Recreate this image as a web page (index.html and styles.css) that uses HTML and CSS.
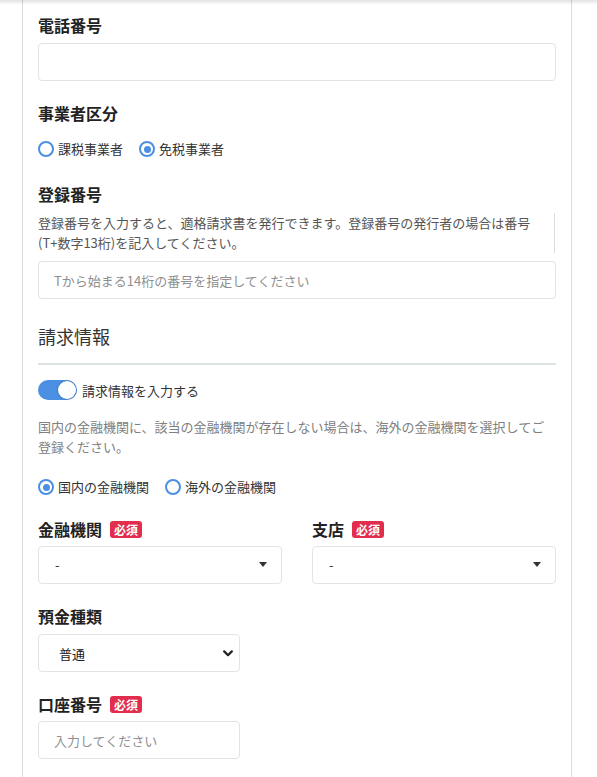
FILE: index.html
```html
<!DOCTYPE html>
<html lang="ja">
<head>
<meta charset="utf-8">
<title>請求情報</title>
<link rel="stylesheet" href="styles.css">
</head>
<body>
<div class="top-shadow"></div>
<main class="card">
  <div class="field">
    <div class="label">電話番号</div>
    <div class="input"></div>
  </div>

  <div class="field">
    <div class="label">事業者区分</div>
    <div class="radios radios-biz">
      <span class="radio-item"><span class="radio"></span><span class="radio-text">課税事業者</span></span>
      <span class="radio-item"><span class="radio checked"></span><span class="radio-text">免税事業者</span></span>
    </div>
  </div>

  <div class="field field-reg">
    <div class="label">登録番号</div>
    <div class="help help-box">登録番号を入力すると、適格請求書を発行できます。登録番号の発行者の場合は番号<br>(T+数字13桁)を記入してください。</div>
    <div class="input input-reg"><span class="placeholder">Tから始まる14桁の番号を指定してください</span></div>
  </div>

  <h2 class="section-title">請求情報</h2>
  <hr class="divider">

  <div class="toggle-row">
    <span class="toggle"><span class="knob"></span></span>
    <span class="toggle-text">請求情報を入力する</span>
  </div>

  <div class="help help-light">国内の金融機関に、該当の金融機関が存在しない場合は、海外の金融機関を選択してご<br>登録ください。</div>

  <div class="radios radios-bank">
    <span class="radio-item"><span class="radio checked"></span><span class="radio-text">国内の金融機関</span></span>
    <span class="radio-item"><span class="radio"></span><span class="radio-text">海外の金融機関</span></span>
  </div>

  <div class="grid-2">
    <div class="col">
      <div class="label">金融機関<span class="badge">必須</span></div>
      <div class="select">
        <span class="select-value">-</span>
        <svg class="caret" width="8" height="5" viewBox="0 0 8 5"><path d="M0 0 L8 0 L4 5 Z" fill="#333"/></svg>
      </div>
    </div>
    <div class="col">
      <div class="label">支店<span class="badge">必須</span></div>
      <div class="select">
        <span class="select-value">-</span>
        <svg class="caret" width="8" height="5" viewBox="0 0 8 5"><path d="M0 0 L8 0 L4 5 Z" fill="#333"/></svg>
      </div>
    </div>
  </div>

  <div class="field">
    <div class="label">預金種類</div>
    <div class="native-select">
      <span class="native-value">普通</span>
      <svg class="chevron" width="10" height="7" viewBox="0 0 10 7"><path d="M1.2 1.4 L5 5.2 L8.8 1.4" fill="none" stroke="#222" stroke-width="2.2" stroke-linecap="round" stroke-linejoin="round"/></svg>
    </div>
  </div>

  <div class="field field-account">
    <div class="label">口座番号<span class="badge">必須</span></div>
    <div class="input input-small"><span class="placeholder">入力してください</span></div>
  </div>
</main>
</body>
</html>
```

FILE: styles.css
```css
* {
  box-sizing: border-box;
}

html, body {
  margin: 0;
  padding: 0;
  background: #ffffff;
}

body {
  font-family: "Noto Sans CJK JP", "Noto Sans", sans-serif;
  color: #222;
  font-size: 13px;
}

.top-shadow {
  position: fixed;
  top: 0;
  left: 0;
  right: 0;
  height: 5px;
  background: linear-gradient(to bottom, rgba(0, 0, 0, 0.11), rgba(0, 0, 0, 0));
  z-index: 5;
}

.card {
  width: 550px;
  margin-left: 22px;
  min-height: 777px;
  padding: 13px 15px 20px;
  border-left: 1px solid #dcdcdc;
  border-right: 1px solid #dcdcdc;
  background: #fff;
}

.field + .field {
  margin-top: 20px;
}

.field-reg {
  margin-top: 23px !important;
}

.label {
  display: flex;
  align-items: center;
  height: 24px;
  line-height: 24px;
  font-size: 16px;
  font-weight: 700;
  color: #222;
  margin-bottom: 6px;
}

.badge {
  display: inline-block;
  margin-left: 8px;
  height: 17px;
  line-height: 17px;
  padding: 0 4px;
  border-radius: 3px;
  background: #e22d4d;
  color: #fff;
  font-size: 12px;
  font-weight: 700;
}

.input {
  height: 38px;
  border: 1px solid #dfe4e6;
  border-radius: 4px;
  background: #fff;
  display: flex;
  align-items: center;
  padding: 0 15px;
}

.placeholder {
  color: #8f8f8f;
  font-size: 13px;
}

.input-reg {
  margin-top: 8px;
}

.input-small {
  width: 202px;
  margin-top: 5px;
}

.field-account .label {
  margin-bottom: 0;
}

.radios {
  display: flex;
  align-items: center;
  height: 20px;
}

.radios-biz {
  margin-top: 14px;
}

.radios-bank {
  margin-top: 20px;
}

.radio-item {
  display: inline-flex;
  align-items: center;
  margin-right: 16px;
}

.radio {
  width: 16px;
  height: 16px;
  border: 2px solid #4a8fe2;
  border-radius: 50%;
  background: #fff;
  position: relative;
  flex: none;
}

.radio.checked::after {
  content: "";
  position: absolute;
  left: 2.5px;
  top: 2.5px;
  width: 7px;
  height: 7px;
  border-radius: 50%;
  background: #4a8fe2;
}

.radio-text {
  margin-left: 4px;
  font-size: 13px;
  color: #333;
  line-height: 20px;
}

.help {
  font-size: 13px;
  line-height: 20px;
}

.help-box {
  margin-top: 7px;
  color: #555;
  border-right: 1px solid #dedede;
  width: 517px;
}

.help-light {
  margin-top: 17px;
  color: #808080;
}

.section-title {
  margin: 24px 0 0;
  font-size: 18px;
  font-weight: 400;
  line-height: 26px;
  height: 26px;
  color: #333;
}

.divider {
  margin: 14px 0 0;
  border: 0;
  height: 2px;
  background: #dde2e5;
}

.toggle-row {
  margin-top: 15px;
  display: flex;
  align-items: center;
  height: 20px;
}

.toggle {
  width: 39px;
  height: 20px;
  border-radius: 10px;
  background: #4a8fe2;
  position: relative;
  flex: none;
}

.knob {
  position: absolute;
  right: 1px;
  top: 1px;
  width: 18px;
  height: 18px;
  border-radius: 50%;
  background: #fff;
  box-shadow: 0 0 2px rgba(0, 0, 0, 0.35);
}

.toggle-text {
  margin-left: 5px;
  font-size: 13px;
  color: #333;
}

.grid-2 {
  margin-top: 20px;
  display: grid;
  grid-template-columns: 1fr 1fr;
  column-gap: 30px;
}

.grid-2 .label {
  margin-bottom: 5px;
}

.grid-2 + .field {
  margin-top: 20px;
}

.select {
  height: 38px;
  border: 1px solid #dfe4e6;
  border-radius: 4px;
  display: flex;
  align-items: center;
  justify-content: space-between;
  padding: 0 14px 2px 16px;
  background: #fff;
}

.select-value {
  font-size: 13px;
  color: #333;
}

.caret {
  display: block;
}

.native-select {
  width: 202px;
  height: 38px;
  border: 1px solid #dfe4e6;
  border-radius: 4px;
  display: flex;
  align-items: center;
  justify-content: space-between;
  padding: 0 6px 0 20px;
  background: #fff;
}

.native-value {
  font-size: 13px;
  color: #222;
}

.chevron {
  display: block;
}
```
